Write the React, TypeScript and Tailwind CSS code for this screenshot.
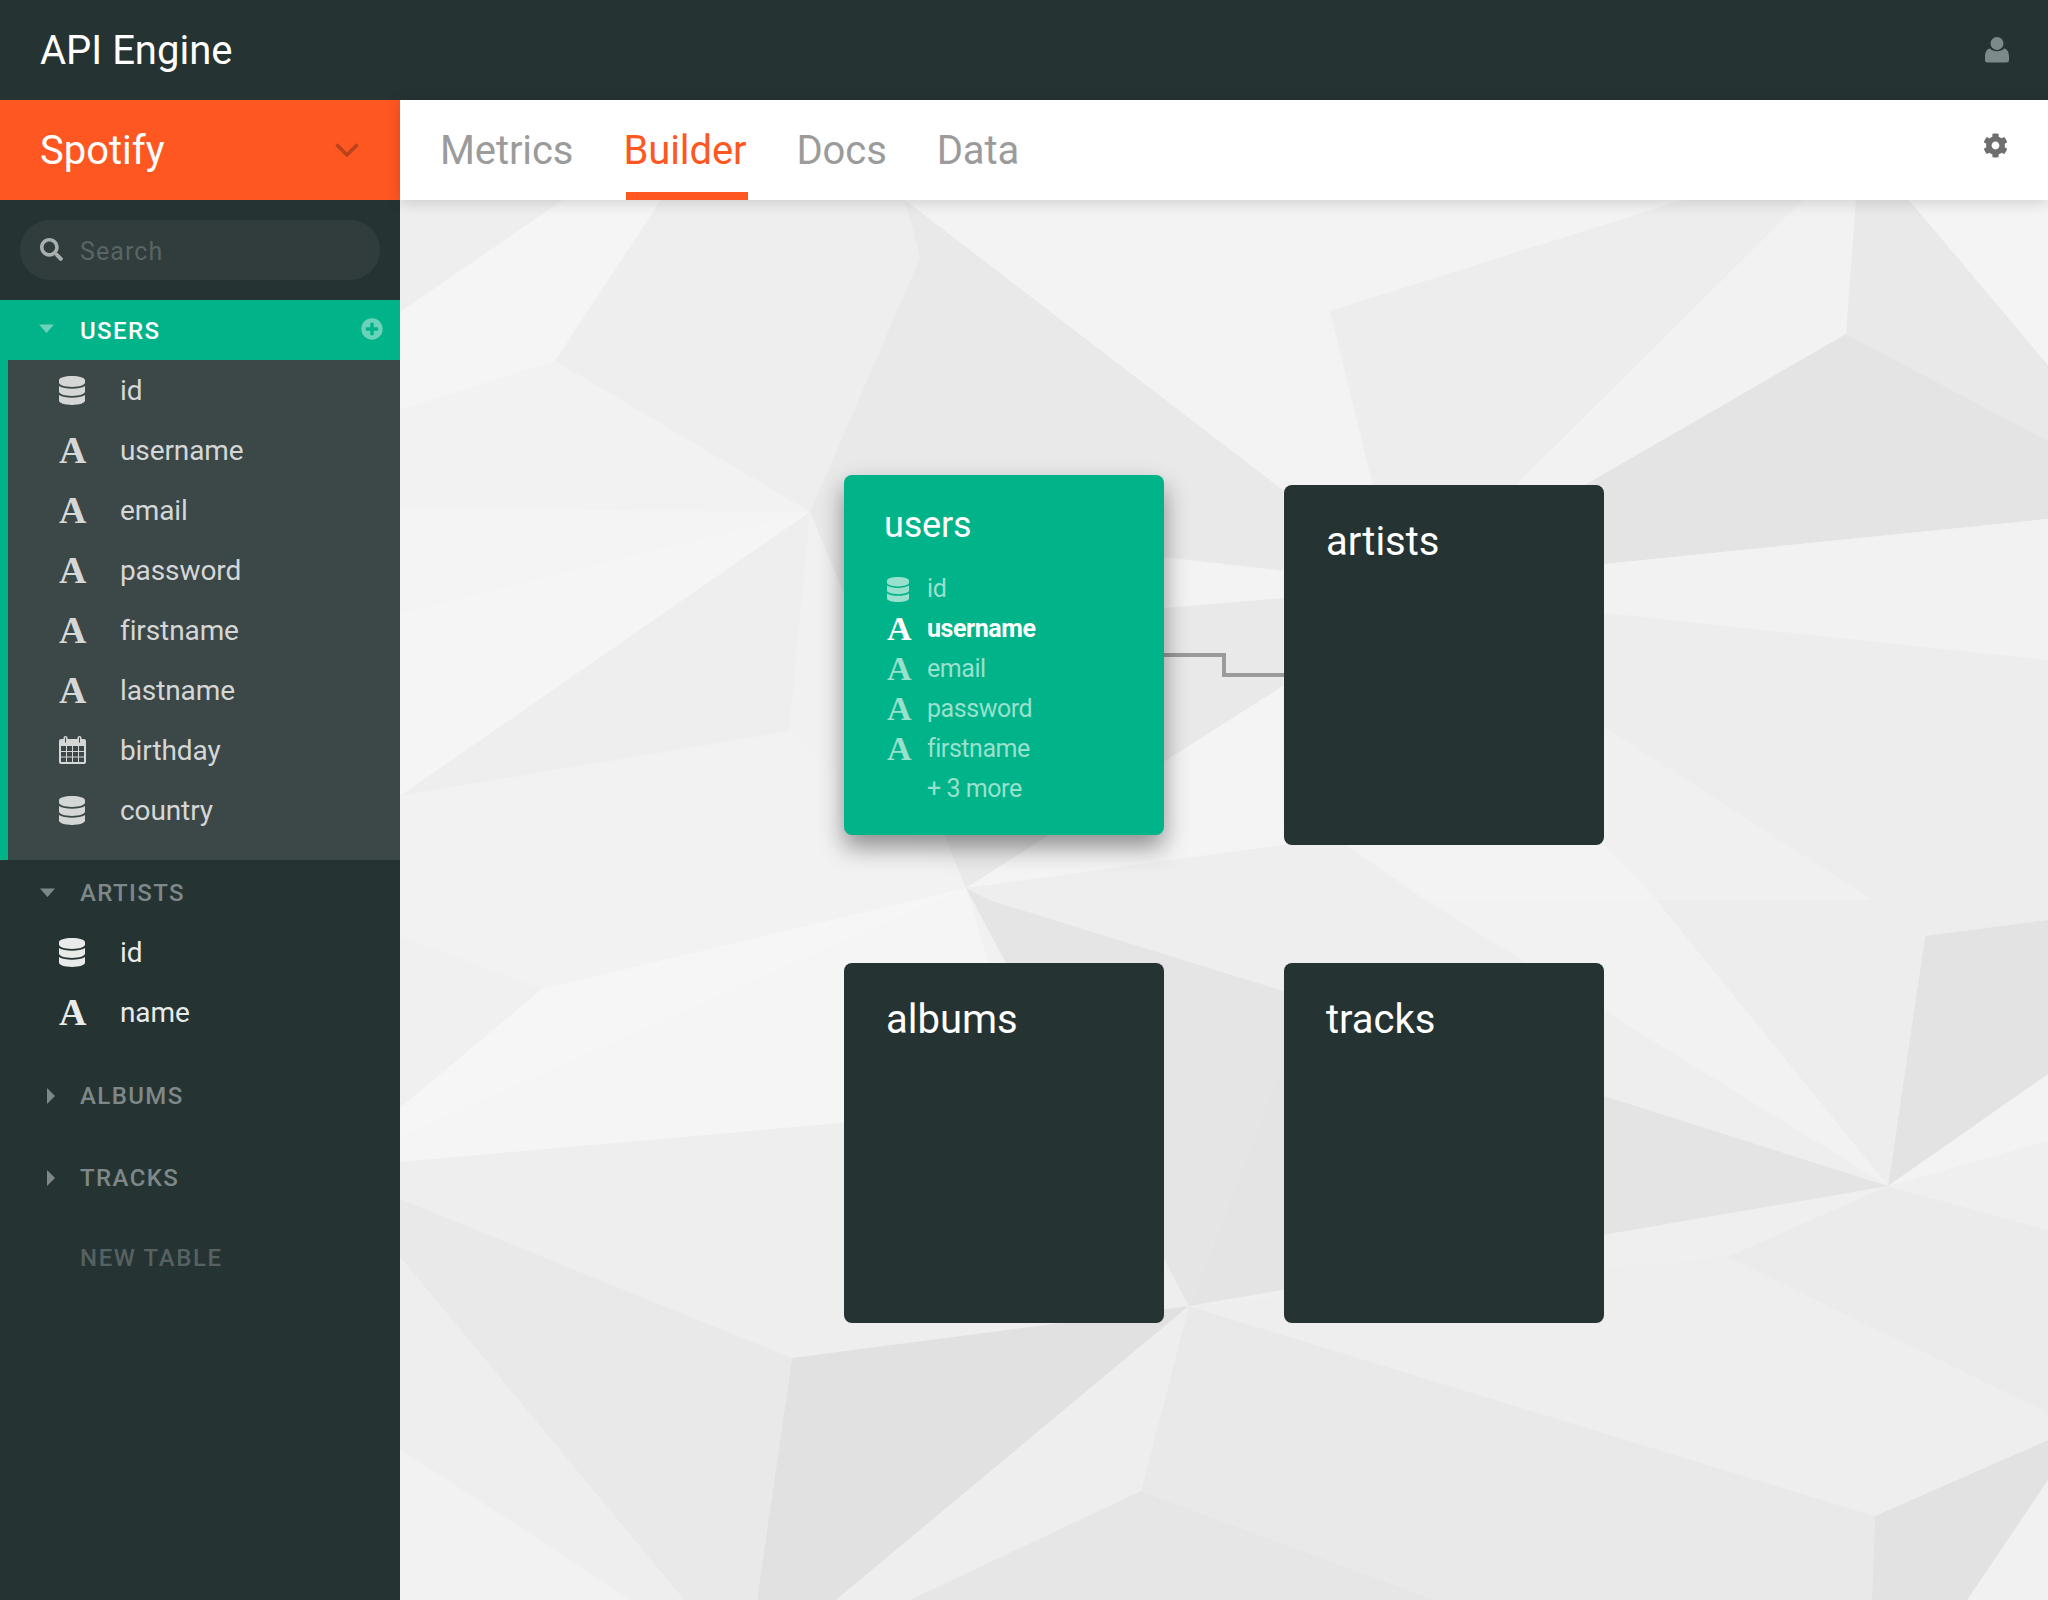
import React from 'react';
import { FaCog, FaDatabase, FaPlusCircle, FaSearch } from 'react-icons/fa';

const facets: [string, string][] = [
    ['#eeeeee', '400,200 563,200 400,312'],
    ['#f5f5f5', '563,200 661,200 555,361 400,410 400,312'],
    ['#eeeeee', '661,200 905,200 920,258 810,512 555,361'],
    ['#e9e9e9', '905,200 1283,490 1283,686 966,888 810,512 920,258'],
    ['#f3f3f3', '905,200 1683,200 1330,311 1373,486 1283,490'],
    ['#ededed', '1330,311 1683,200 1803,200 1515,486 1373,486'],
    ['#f2f2f2', '1803,200 1856,200 1846,334 1583,486 1515,486'],
    ['#e9e9e9', '1856,200 1909,200 2048,365 2048,441 1846,334'],
    ['#f4f4f4', '1909,200 2048,200 2048,365'],
    ['#e4e4e4', '1846,334 2048,441 2048,519 1604,564 1604,486 1583,486'],
    ['#f2f2f2', '400,410 555,361 810,512 400,508'],
    ['#f4f4f4', '400,508 810,512 400,613'],
    ['#f5f5f5', '400,613 810,512 400,796'],
    ['#eeeeee', '400,796 810,512 789,731'],
    ['#f2f2f2', '400,796 789,731 966,888 542,989 400,936'],
    ['#f3f3f3', '1164,557 1284,571 1284,598 1164,608'],
    ['#f4f4f4', '966,888 1283,686 1284,845'],
    ['#f2f2f2', '1604,564 2048,519 2048,660 1604,613'],
    ['#ededed', '1604,613 2048,660 2048,920 1925,936 1872,900 1604,727'],
    ['#f0f0f0', '1604,727 1872,900 1656,900 1604,845'],
    ['#f3f3f3', '1346,845 1604,845 1656,900 1425,900'],
    ['#eeeeee', '966,888 1284,845 1346,845 1425,900 989,900'],
    ['#f0f0f0', '400,936 542,989 400,1108'],
    ['#f6f6f6', '542,989 966,888 400,1137 400,1108'],
    ['#f5f5f5', '400,1137 966,888 1000,1000 842,1123 400,1162'],
    ['#eeeeee', '400,1162 842,1123 1283,1061 1189,1306 792,1358 400,1199'],
    ['#e9e9e9', '400,1199 792,1358 757,1600 684,1600 400,1257'],
    ['#eeeeee', '400,1257 684,1600 631,1600 400,1449'],
    ['#f2f2f2', '400,1449 631,1600 400,1600'],
    ['#e1e1e1', '792,1358 1189,1306 836,1600 757,1600'],
    ['#eeeeee', '1189,1306 1141,1491 910,1600 836,1600'],
    ['#e6e6e6', '1141,1491 1436,1600 910,1600'],
    ['#e9e9e9', '1189,1306 1875,1516 1872,1600 1436,1600 1141,1491'],
    ['#efefef', '1189,1306 1888,1186 1727,1257'],
    ['#eeeeee', '1189,1306 1727,1257 2048,1413 2048,1440 1875,1516'],
    ['#ebebeb', '1727,1257 1888,1186 2048,1230 2048,1413'],
    ['#e2e2e2', '1875,1516 2048,1440 2048,1480 1967,1600 1872,1600'],
    ['#f3f3f3', '1888,1186 2048,1074 2048,1141'],
    ['#efefef', '1888,1186 2048,1141 2048,1230'],
    ['#e3e3e3', '1925,936 2048,920 2048,1074 1888,1186'],
    ['#ededed', '1656,900 1872,900 1925,936 1888,1186'],
    ['#f2f2f2', '1425,900 1656,900 1888,1186'],
    ['#eeeeee', '989,900 1425,900 1888,1186 1604,1096 1283,991'],
    ['#e5e5e5', '989,900 1283,991 1283,1061 1189,1306 966,888'],
    ['#e4e4e4', '1283,991 1604,1096 1888,1186 1189,1306 1283,1061'],
];

const TextIcon = ({ className }: { className: string }) => (
    <span className={`font-['Liberation_Serif',serif] font-bold leading-none ${className}`}>A</span>
);

const CalendarIcon = () => (
    <svg viewBox="0 0 27 28" className="w-[27px] h-[28px]" fill="currentColor">
        <path
            fillRule="evenodd"
            d="M2 3h2.500V1.500a2 1.500 0 0 1 4 0V3h10V1.500a2 1.500 0 0 1 4 0V3H25a2 2 0 0 1 2 2v21a2 2 0 0 1-2 2H2a2 2 0 0 1-2-2V5a2 2 0 0 1 2-2zM6 1.500v5h1v-5zM20 1.500v5h1v-5zM2 10v5h5v-5zM8 10v5h5v-5zM14 10v5h5v-5zM20 10v5h5v-5zM2 16v4.500h5V16zM8 16v4.500h5V16zM14 16v4.500h5V16zM20 16v4.500h5V16zM2 21.500V26h5v-4.500zM8 21.500V26h5v-4.500zM14 21.500V26h5v-4.500zM20 21.500V26h5v-4.500z"
        />
    </svg>
);

const UserIcon = () => (
    <svg viewBox="0 0 24 26" className="w-6 h-[26px]" fill="#7d8a8a">
        <circle cx="12" cy="6.500" r="6.500" />
        <path d="M5 11.500c1.500 1.700 4 2.800 7 2.800s5.500-1.100 7-2.800c3 .5 5 3.500 5 8V23a2.500 2.500 0 0 1-2.500 2.500h-19A2.500 2.500 0 0 1 0 23v-3.500c0-4.500 2-7.500 5-8z" />
    </svg>
);

const Caret = ({ open, className }: { open: boolean; className: string }) => (
    <svg viewBox="0 0 16 16" className={`w-4 h-4 ${className}`} fill="currentColor">
        {open ? <path d="M0 3.500h15L7.500 12z" /> : <path d="M4 0l8 8-8 8z" />}
    </svg>
);

type FieldType = 'id' | 'text' | 'date';

const SideRow = ({ type, name, bright }: { type: FieldType; name: string; bright?: boolean }) => (
    <div className={`h-[60px] flex items-center text-[28px] tracking-[-0.1px] ${bright ? 'text-[#e9ebeb]' : 'text-[#d5d7d7]'}`}>
        <span className="w-[27px] ml-[59px] mr-[34px] flex items-center">
            {type === 'id' && <FaDatabase preserveAspectRatio="none" className="w-[26px] h-[29px]" />}
            {type === 'text' && <TextIcon className="text-[38px]" />}
            {type === 'date' && <CalendarIcon />}
        </span>
        <span className="pt-[2px]">{name}</span>
    </div>
);

const SectionHead = ({ title, open, dim }: { title: string; open?: boolean; dim?: boolean }) => (
    <div className={`flex items-center h-[60px] text-[24px] font-medium ${dim ? 'text-[#566161] tracking-[1.6px]' : 'text-[#7e8888] tracking-[1.4px]'}`}>
        <span className="w-[80px] pl-[40px] flex">
            {!dim && <Caret open={!!open} className={open ? 'text-[#7e8888]' : 'text-[#7e8888] ml-[3px]'} />}
        </span>
        {title}
    </div>
);

const usersFields: [FieldType, string][] = [
    ['id', 'id'],
    ['text', 'username'],
    ['text', 'email'],
    ['text', 'password'],
    ['text', 'firstname'],
    ['text', 'lastname'],
    ['date', 'birthday'],
    ['id', 'country'],
];

const Sidebar = () => (
    <aside className="w-[400px] shrink-0 bg-[#263333] flex flex-col">
        <div className="h-[100px] bg-[#ff5722] flex items-center justify-between pl-[40px] pr-[41px] text-white text-[40px]">
            <span className="pt-[2px]">Spotify</span>
            <svg viewBox="0 0 24 14" className="w-6 h-[14px]" fill="none" stroke="#b9431c" strokeWidth="3.500">
                <path d="M1.500 1.500L12 12 22.500 1.500" />
            </svg>
        </div>
        <div className="px-5 py-5">
            <div className="h-[60px] rounded-full bg-[#313d3d] flex items-center pl-[20px] text-[#596464] text-[25px] tracking-[1.1px]">
                <FaSearch size={23} className="text-[#a9aeae] -mt-[2px] mr-[17px]" />
                <span className="pt-[4px]">Search</span>
            </div>
        </div>
        <div className="h-[60px] bg-[#00b388] flex items-center text-white text-[24px] font-medium tracking-[1.4px]">
            <span className="w-[80px] pl-[39px] flex">
                <Caret open className="text-[#6bd3ba] -mt-[2px]" />
            </span>
            <span className="pt-[2px]">USERS</span>
            <FaPlusCircle size={22} className="ml-auto mr-[17px] -mt-[3px] text-[#6bd3ba]" />
        </div>
        <div className="bg-[#00b388] pl-2">
            <div className="bg-[#3c4747] pb-5">
                <div className="-ml-2">
                    {usersFields.map(([type, name]) => (
                        <SideRow key={name} type={type} name={name} />
                    ))}
                </div>
            </div>
        </div>
        <div className="mt-[3px] -mb-[1px]">
            <SectionHead title="ARTISTS" open />
        </div>
        <SideRow type="id" name="id" bright />
        <SideRow type="text" name="name" bright />
        <div className="mt-[24px]">
            <SectionHead title="ALBUMS" />
        </div>
        <div className="mt-[22px]">
            <SectionHead title="TRACKS" />
        </div>
        <div className="mt-[20px]">
            <SectionHead title="NEW TABLE" dim />
        </div>
    </aside>
);

const tabs = ['Metrics', 'Builder', 'Docs', 'Data'];

const TabBar = () => (
    <div className="relative z-10 h-[100px] bg-white shadow-[0_2px_14px_rgba(0,0,0,0.16)] flex pl-[40px] pr-[40px]">
        <div className="flex gap-[50px]">
            {tabs.map((tab) => (
                <div
                    key={tab}
                    className={`relative h-full flex items-center text-[40px] tracking-[-0.1px] pt-[2px] ${tab === 'Builder' ? 'text-[#ff5722]' : 'text-[#9b9b9b]'}`}
                >
                    {tab}
                    {tab === 'Builder' && <span className="absolute bottom-0 left-[3px] -right-[2px] h-2 bg-[#ff5722]" />}
                </div>
            ))}
        </div>
        <FaCog size={25} className="ml-auto mt-[33px] text-[#6e6e6e]" />
    </div>
);

const TableCard = ({ title, className }: { title: string; className: string }) => (
    <div className={`absolute w-[320px] h-[360px] rounded-lg bg-[#263333] text-white text-[40px] pt-[30px] leading-[54px] ${className}`}>
        {title}
    </div>
);

const cardFields: [FieldType, string][] = [
    ['id', 'id'],
    ['text', 'username'],
    ['text', 'email'],
    ['text', 'password'],
    ['text', 'firstname'],
];

const UsersCard = () => (
    <div className="absolute left-[444px] top-[275px] w-[320px] h-[360px] rounded-lg bg-[#00b388] shadow-[0_12px_24px_rgba(0,0,0,0.42)] pl-[40px] pt-[27px]">
        <div className="text-white text-[36px] tracking-[-0.2px] leading-[46px] mb-[21px]">users</div>
        {cardFields.map(([type, name]) => (
            <div
                key={name}
                className={`h-10 flex items-center text-[25px] tracking-[-0.45px] ${name === 'username' ? 'text-white font-bold' : 'text-[#99e0cf]'}`}
            >
                <span className="w-[24px] ml-[3px] mr-[16px] flex">
                    {type === 'id' ? (
                        <FaDatabase preserveAspectRatio="none" className="w-[22px] h-[25px]" />
                    ) : (
                        <TextIcon className="text-[34px]" />
                    )}
                </span>
                {name}
            </div>
        ))}
        <div className="h-10 flex items-center text-[25px] tracking-[-0.45px] text-[#99e0cf] pl-[43px]">+ 3 more</div>
    </div>
);

const Canvas = () => (
    <div className="relative flex-1 overflow-hidden bg-[#f1f1f1]">
        <svg viewBox="400 200 1648 1400" className="absolute inset-0 w-full h-full">
            {facets.map(([fill, points]) => (
                <polygon key={points} fill={fill} points={points} />
            ))}
        </svg>
        <svg viewBox="0 0 120 24" className="absolute left-[764px] top-[453px] w-[120px] h-6" fill="none" stroke="#9b9b9b" strokeWidth="4">
            <path d="M0 2h60v20h60" />
        </svg>
        <UsersCard />
        <TableCard title="artists" className="left-[884px] top-[285px] pl-[42px]" />
        <TableCard title="albums" className="left-[444px] top-[763px] pl-[42px]" />
        <TableCard title="tracks" className="left-[884px] top-[763px] pl-[42px]" />
    </div>
);

export default function App() {
    return (
        <div className="w-[2048px] h-[1600px] overflow-hidden flex flex-col font-['Roboto',sans-serif]">
            <header className="h-[100px] shrink-0 bg-[#263333] flex items-center justify-between pl-[40px] pr-[39px] text-white text-[40px]">
                <span className="pt-[2px]">API Engine</span>
                <UserIcon />
            </header>
            <div className="flex flex-1 min-h-0">
                <Sidebar />
                <main className="flex-1 flex flex-col min-w-0">
                    <TabBar />
                    <Canvas />
                </main>
            </div>
        </div>
    );
}
